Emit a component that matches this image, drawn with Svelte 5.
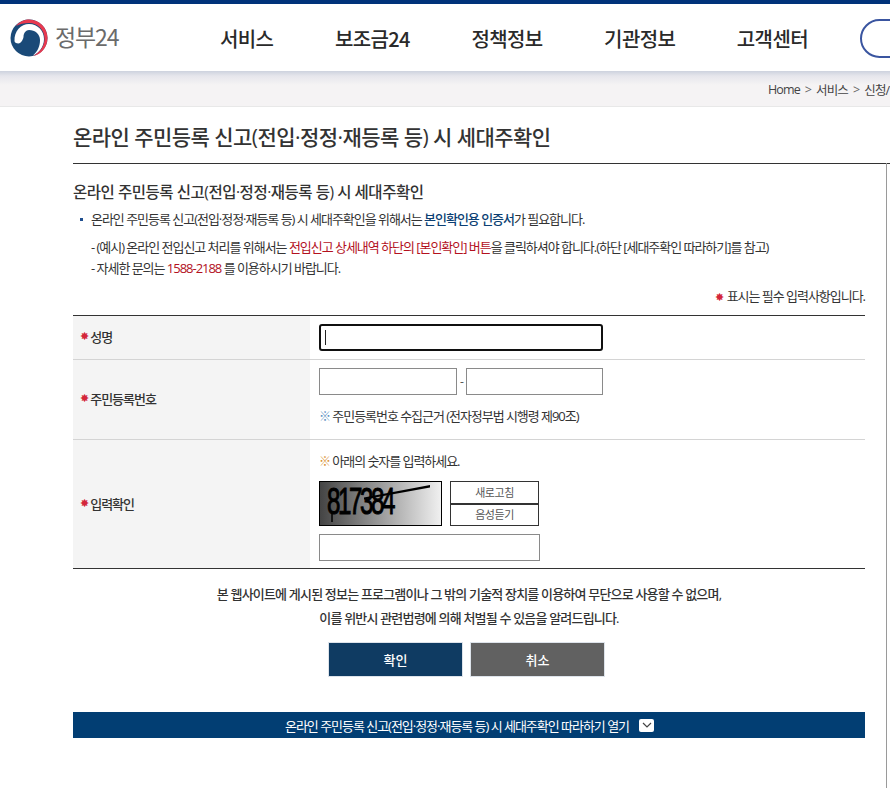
<script>
  const nav = ['서비스', '보조금24', '정책정보', '기관정보', '고객센터'];
</script>

<div class="page">
  <header class="header">
    <a class="logo" href="#top">
      <svg width="38" height="38" viewBox="0 0 38 38" aria-hidden="true">
        <circle cx="19" cy="19" r="18.500" fill="#1a4a78" />
        <path d="M4.500 22C4 12 11 5 19 5c9 0 15 7 15 15 0 8-5 14-11 16.500 5-4.500 7-9.500 7-15.500 0-6-5-10-11-10-3 0-5.500 3-5.500 7 -.5 3-3 6.500-5 6.500-2.500 0-4-1-4-2.500z" fill="#fff" />
        <path d="M6 7c3-4 8-6.500 13-6.500 10.500 0 18.500 8.500 18.500 18.500 0 9-6.500 17-14.500 18 7-3.500 11.500-10 11.500-17C34.500 11 28 4 19 4c-5 0-9.500 1-13 3z" fill="#e8394f" />
      </svg>
      <span class="logo-text">정부24</span>
    </a>
    <nav class="nav">
      {#each nav as item}
        <a href="#top">{item}</a>
      {/each}
    </nav>
    <div class="search-pill"></div>
  </header>

  <div class="crumbs">
    <span>Home</span><i>&gt;</i><span>서비스</span><i>&gt;</i><span>신청/</span>
  </div>

  <main class="main">
    <h1>온라인 주민등록 신고(전입·정정·재등록 등) 시 세대주확인</h1>
    <div class="rule"></div>

    <h2>온라인 주민등록 신고(전입·정정·재등록 등) 시 세대주확인</h2>
    <p class="bullet">온라인 주민등록 신고(전입·정정·재등록 등) 시 세대주확인을 위해서는 <b class="blue">본인확인용 인증서</b>가 필요합니다.</p>
    <p class="note first">- (예시) 온라인 전입신고 처리를 위해서는 <span class="red">전입신고 상세내역 하단의 [본인확인] 버튼</span>을 클릭하셔야 합니다.(하단 [세대주확인 따라하기]를 참고)</p>
    <p class="note">- 자세한 문의는 <span class="red">1588-2188</span> 를 이용하시기 바랍니다.</p>
    <p class="required"><span class="star">✸</span> 표시는 필수 입력사항입니다.</p>

    <div class="form">
      <div class="row r1">
        <div class="th"><span class="star">✸</span> 성명</div>
        <div class="td"><div class="focus-input"><span class="caret"></span></div></div>
      </div>
      <div class="row r2">
        <div class="th"><span class="star">✸</span> 주민등록번호</div>
        <div class="td">
          <div class="rrn"><div class="input w138"></div><span class="dash">-</span><div class="input w137"></div></div>
          <p class="hint"><span class="ref blue-ref">※</span> 주민등록번호 수집근거 (전자정부법 시행령 제90조)</p>
        </div>
      </div>
      <div class="row r3">
        <div class="th"><span class="star">✸</span> 입력확인</div>
        <div class="td">
          <p class="hint top"><span class="ref orange-ref">※</span> 아래의 숫자를 입력하세요.</p>
          <div class="captcha-row">
            <div class="captcha">
              <span>817384</span>
              <svg width="121" height="43" viewBox="0 0 121 43" aria-hidden="true">
                <path d="M44 15.500 110 3 110 5.500 44 17.500z" fill="#000" />
                <path d="M12 30V40" stroke="#000" stroke-width="1.500" fill="none" />
              </svg>
            </div>
            <div class="cap-btns">
              <button type="button">새로고침</button>
              <button type="button">음성듣기</button>
            </div>
          </div>
          <div class="input w221"></div>
        </div>
      </div>
    </div>

    <div class="warn">
      <p>본 웹사이트에 게시된 정보는 프로그램이나 그 밖의 기술적 장치를 이용하여 무단으로 사용할 수 없으며,</p>
      <p>이를 위반시 관련법령에 의해 처벌될 수 있음을 알려드립니다.</p>
    </div>

    <div class="actions">
      <button type="button" class="ok">확인</button>
      <button type="button" class="cancel">취소</button>
    </div>

    <div class="guide">
      <span>온라인 주민등록 신고(전입·정정·재등록 등) 시 세대주확인 따라하기 열기</span>
      <span class="chev">
        <svg width="10" height="6" viewBox="0 0 10 6" aria-hidden="true"><path d="M1 1l4 4 4-4" fill="none" stroke="#444" stroke-width="1.200" /></svg>
      </span>
    </div>
  </main>
  <div class="vline"></div>
</div>

<style>
  :global(html), :global(body) {
    margin: 0;
    background: #fff;
    overflow: hidden;
  }
  .page {
    position: relative;
    width: 890px;
    height: 788px;
    overflow: hidden;
    font-family: "Open Sans", "Noto Sans CJK KR", sans-serif;
    color: #333;
    letter-spacing: -0.064em;
  }
  p, h1, h2 { margin: 0; }
  a { color: inherit; text-decoration: none; }

  .header {
    height: 67px;
    border-top: 4px solid #00327a;
    display: flex;
    align-items: center;
    background: #fff;
    position: relative;
  }
  .logo {
    display: flex;
    align-items: center;
    gap: 7px;
    margin-left: 10px;
    width: 211px;
    flex: none;
  }
  .logo-text {
    font-family: "Noto Sans CJK KR", sans-serif;
    font-size: 23px;
    font-weight: 400;
    color: #6b6b6b;
    letter-spacing: -0.05em;
    line-height: 30px;
    margin-top: -3px;
  }
  .nav {
    display: flex;
    gap: 61.500px;
    font-family: "Noto Sans CJK KR", sans-serif;
    font-size: 20px;
    font-weight: 500;
    color: #2a2a2a;
    letter-spacing: -0.03em;
    flex: none;
    padding-top: 2px;
    margin-left: -1px;
  }
  .search-pill {
    position: absolute;
    left: 860px;
    top: 15px;
    width: 80px;
    height: 35px;
    border: 2px solid #3a55a0;
    border-radius: 20px;
  }

  .crumbs {
    height: 36px;
    background: linear-gradient(#cdd2de 0, #e6e6ec 5px, #f5f3f4 14px);
    border-bottom: 1px solid #e8e8e8;
    display: flex;
    align-items: center;
    padding-left: 768px;
    font-size: 12.500px;
    letter-spacing: -0.07em;
    color: #444;
    white-space: nowrap;
    padding-top: 1px;
    box-sizing: border-box;
  }
  .crumbs i { font-style: normal; margin: 0 5px; color: #666; }

  .main {
    margin-left: 73px;
    width: 792px;
    padding-top: 17px;
  }
  h1 {
    font-size: 21px;
    font-weight: 500;
    color: #333;
    line-height: 26px;
    letter-spacing: -0.026em;
    white-space: nowrap;
  }
  .rule {
    height: 1px;
    width: 817px;
    background: #333;
    margin-top: 13px;
  }
  h2 {
    font-size: 15.500px;
    font-weight: 500;
    margin-top: 18px;
    line-height: 20px;
    color: #333;
    letter-spacing: -0.03em;
    white-space: nowrap;
  }
  .bullet, .note {
    font-size: 13px;
    padding-left: 18px;
    position: relative;
    white-space: nowrap;
    color: #333;
  }
  .bullet { margin-top: 6px; line-height: 22px; }
  .note { line-height: 21px; }
  .bullet::before {
    content: "";
    position: absolute;
    left: 7px;
    top: 10px;
    width: 3px;
    height: 3px;
    background: #1f4f8f;
  }
  .note.first { margin-top: 7px; }
  .blue { color: #0b3f73; font-weight: 500; }
  .red { color: #b3111e; }
  .star {
    color: #d3263a;
    font-size: 11px;
    font-family: "DejaVu Sans", sans-serif;
    letter-spacing: 0;
  }
  .required {
    font-size: 13px;
    text-align: right;
    margin-top: 8px;
    line-height: 18px;
    height: 18px;
  }

  .form {
    margin-top: 10px;
    border-top: 1px solid #333;
    border-bottom: 1px solid #333;
  }
  .row {
    display: flex;
    border-bottom: 1px solid #d4d4d4;
    box-sizing: border-box;
  }
  .row:last-child { border-bottom: 0; }
  .r1 { height: 44px; }
  .r2 { height: 80px; }
  .r3 { height: 128px; }
  .th {
    width: 237px;
    flex: none;
    box-sizing: border-box;
    background: #f4f4f4;
    display: flex;
    align-items: center;
    gap: 1px;
    padding-left: 7px;
    padding-bottom: 2px;
    font-size: 13px;
    font-weight: 500;
    color: #333;
  }
  .td {
    padding-left: 9px;
    font-size: 13px;
    flex: 1;
  }
  .focus-input {
    width: 284px;
    height: 27px;
    margin-top: 8px;
    border: 2px solid #101010;
    border-radius: 3px;
    box-sizing: border-box;
    display: flex;
    align-items: center;
    padding-left: 4px;
  }
  .caret { width: 1px; height: 15px; background: #222; }
  .rrn {
    display: flex;
    align-items: center;
    margin-top: 8px;
  }
  .dash { width: 9px; text-align: center; color: #555; font-size: 12px; }
  .input {
    height: 27px;
    border: 1px solid #8a8a8a;
    box-sizing: border-box;
    background: #fff;
  }
  .w138 { width: 138px; }
  .w137 { width: 137px; }
  .w221 { width: 221px; }
  .hint { margin-top: 12px; line-height: 18px; color: #333; white-space: nowrap; letter-spacing: -0.08em; }
  .hint.top { margin-top: 12px; }
  .ref { font-size: 12px; }
  .blue-ref { color: #5a8fc0; }
  .orange-ref { color: #d9902f; }
  .captcha-row {
    display: flex;
    gap: 8px;
    margin-top: 10px;
    margin-bottom: 8px;
  }
  .captcha {
    position: relative;
    width: 123px;
    height: 45px;
    box-sizing: border-box;
    border: 1px solid #000;
    background: linear-gradient(90deg, #444 0%, #8a8a8a 40%, #f0f0f0 100%);
    overflow: hidden;
  }
  .captcha span {
    position: absolute;
    left: 7px;
    top: -1px;
    font-family: "Liberation Sans", sans-serif;
    font-size: 36px;
    line-height: 42px;
    color: #000;
    letter-spacing: -0.1em;
    -webkit-text-stroke: 1px #000;
    transform: scaleX(0.67);
    transform-origin: left center;
  }
  .captcha svg { position: absolute; left: 0; top: 0; }
  .cap-btns {
    display: flex;
    flex-direction: column;
    width: 89px;
  }
  .cap-btns button {
    height: 23px;
    border: 1px solid #333;
    background: #fff;
    font: inherit;
    font-size: 11px;
    letter-spacing: -0.04em;
    color: #555;
    padding: 0 0 2px;
    box-sizing: border-box;
  }
  .cap-btns button + button { height: 22px; }

  .warn {
    margin-top: 13px;
    text-align: center;
    font-size: 13px;
    font-weight: 500;
    line-height: 24px;
    letter-spacing: -0.062em;
    color: #333;
    white-space: nowrap;
  }
  .actions {
    display: flex;
    justify-content: center;
    gap: 7px;
    margin-top: 12px;
    padding-right: 5px;
  }
  .actions button {
    width: 135px;
    height: 35px;
    border: 1px solid #dde3ea;
    color: #fff;
    font: inherit;
    font-size: 13px;
    font-weight: 500;
    letter-spacing: 0;
    padding: 0 0 1px;
    box-sizing: border-box;
  }
  .ok { background: #0f3b62; }
  .cancel { background: #616161; }
  .guide {
    margin-top: 35px;
    height: 26px;
    background: #023e73;
    color: #fff;
    font-size: 13px;
    display: flex;
    align-items: center;
    justify-content: center;
    gap: 10px;
    white-space: nowrap;
    padding-left: 1px;
  }
  .chev {
    width: 15px;
    height: 13px;
    background: #fff;
    border-radius: 2px;
    display: flex;
    align-items: center;
    justify-content: center;
  }
  .vline {
    position: absolute;
    left: 886px;
    top: 163px;
    bottom: 0;
    width: 1px;
    background: #9a9a9a;
  }
</style>
